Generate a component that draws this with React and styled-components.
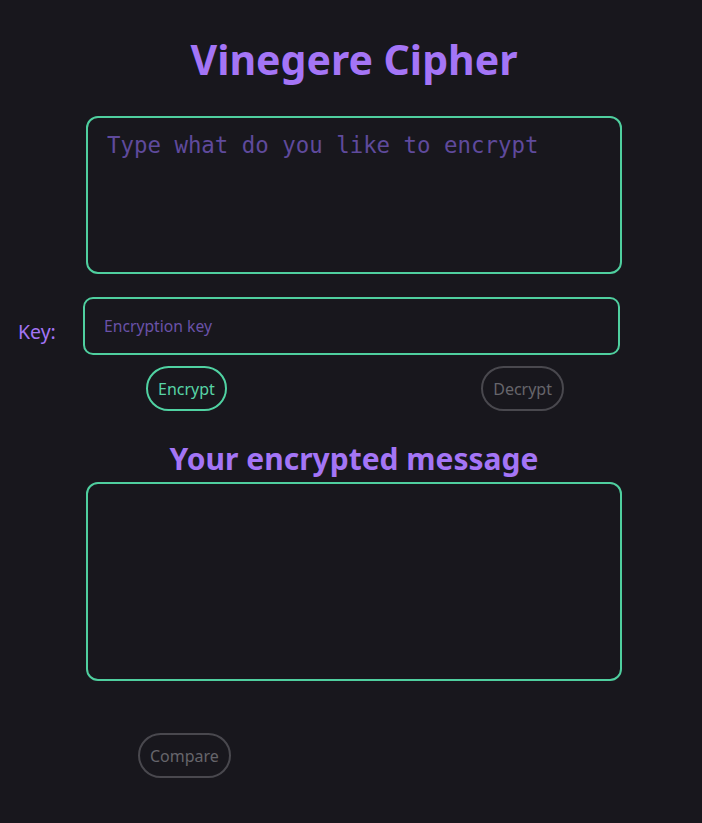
import React, { useState } from 'react';
import styled, { createGlobalStyle } from 'styled-components';

const GlobalStyle = createGlobalStyle`
    body {
        margin: 0;
        background-color: #18171d;
        font-family: "Noto Sans", "Open Sans", sans-serif;
    }
`;

const Page = styled.div`
    width: 702px;
    min-height: 823px;
    box-sizing: border-box;
    padding: 28px 0 0 6px;
    display: flex;
    flex-direction: column;
    align-items: center;
`;

const Title = styled.h1`
    margin: 0 0 26px 0;
    color: #a475f6;
    font-size: 41px;
    font-weight: 700;
    line-height: 62px;
`;

const SubTitle = styled.h2`
    margin: 0 0 3px 0;
    color: #a475f6;
    font-size: 30px;
    font-weight: 700;
    line-height: 40px;
`;

const TextBox = styled.textarea`
    width: 536px;
    height: ${props => props.$height}px;
    box-sizing: border-box;
    background-color: transparent;
    border: 2px solid #4fcf9f;
    border-radius: 12px;
    padding: 14px 19px;
    color: #c9b4ff;
    font-family: "DejaVu Sans Mono", monospace;
    font-size: 22.4px;
    resize: none;
    outline: none;
    &::placeholder {
        color: #5f4a9c;
    }
`;

const KeyRow = styled.div`
    display: flex;
    align-items: center;
    margin: 23px 0 0 -70px;
`;

const KeyLabel = styled.label`
    color: #a475f6;
    font-size: 19.5px;
    width: 65px;
    padding-top: 10px;
`;

const KeyInput = styled.input`
    width: 537px;
    height: 58px;
    box-sizing: border-box;
    background-color: transparent;
    border: 2px solid #4fcf9f;
    border-radius: 10px;
    padding: 0 19px;
    color: #c9b4ff;
    font-family: "Noto Sans", sans-serif;
    font-size: 15.7px;
    outline: none;
    &::placeholder {
        color: #6a52a8;
    }
`;

const ButtonRow = styled.div`
    width: 536px;
    display: flex;
    justify-content: space-between;
    padding: 0 58px 0 60px;
    box-sizing: border-box;
    margin: 11px 0 28px 0;
`;

const PillButton = styled.button`
    height: 45px;
    padding: 0 10px;
    background-color: transparent;
    border: 2.5px solid ${props => (props.$active ? '#50d2a2' : '#49484e')};
    border-radius: 24px;
    color: ${props => (props.$active ? '#57d4a6' : '#66656b')};
    font-family: "Noto Sans", sans-serif;
    font-size: 16px;
    cursor: pointer;
`;

const BottomRow = styled.div`
    width: 536px;
    padding: 0 0 0 52px;
    box-sizing: border-box;
    margin-top: 52px;
`;

const App = () => {
    const [message, setMessage] = useState('');
    const [key, setKey] = useState('');
    const [result, setResult] = useState('');

    return (
        <Page>
            <GlobalStyle />
            <Title>Vinegere Cipher</Title>
            <TextBox
                $height={158}
                placeholder="Type what do you like to encrypt"
                value={message}
                onChange={e => setMessage(e.target.value)}
            />
            <KeyRow>
                <KeyLabel>Key:</KeyLabel>
                <KeyInput
                    placeholder="Encryption key"
                    value={key}
                    onChange={e => setKey(e.target.value)}
                />
            </KeyRow>
            <ButtonRow>
                <PillButton $active>Encrypt</PillButton>
                <PillButton>Decrypt</PillButton>
            </ButtonRow>
            <SubTitle>Your encrypted message</SubTitle>
            <TextBox $height={199} value={result} onChange={e => setResult(e.target.value)} />
            <BottomRow>
                <PillButton>Compare</PillButton>
            </BottomRow>
        </Page>
    );
};

export default App;
